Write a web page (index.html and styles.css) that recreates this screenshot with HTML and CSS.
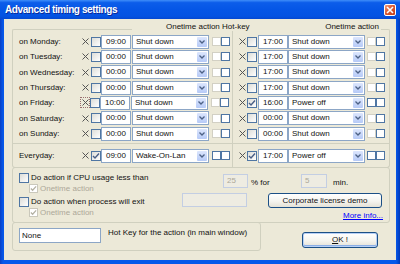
FILE: index.html
```html
<!DOCTYPE html>
<html>
<head>
<meta charset="utf-8">
<link rel="stylesheet" href="styles.css">
</head>
<body>
<div class="window">
  <div class="titlebar">
    <span class="title">Advanced timing settings</span>
    <span class="close"><svg width="8" height="8" viewBox="0 0 8 8"><path d="M1 1L7 7M7 1L1 7" stroke="#fff" stroke-width="1.6"/></svg></span>
  </div>
  <div class="client">
    <div class="cap">
      <span class="seg seg-l"></span>
      <span class="cap-t1">Onetime action Hot-key</span>
      <span class="cap-t2">Onetime action</span>
      <span class="seg seg-r"></span>
    </div>
    <div class="panel">
      <div class="week">
        <div class="half l">
          <div class="row"><span class="day">on Monday:</span><span class="x"><svg width="7" height="7" viewBox="0 0 7 7"><path d="M0.5 0.5L6.5 6.5M6.5 0.5L0.5 6.5" stroke="#555" stroke-width="1"/></svg></span><span class="cb"></span><span class="time">09:00</span><span class="combo"><span class="ct">Shut down</span><span class="arrow"><svg width="6" height="4" viewBox="0 0 6 4"><path d="M0.5 0.5L3 3L5.5 0.5" stroke="#4D6185" stroke-width="1.3" fill="none"/></svg></span></span><span class="hk first dis"></span><span class="hk"></span></div>
          <div class="row"><span class="day">on Tuesday:</span><span class="x"><svg width="7" height="7" viewBox="0 0 7 7"><path d="M0.5 0.5L6.5 6.5M6.5 0.5L0.5 6.5" stroke="#555" stroke-width="1"/></svg></span><span class="cb"></span><span class="time">00:00</span><span class="combo"><span class="ct">Shut down</span><span class="arrow"><svg width="6" height="4" viewBox="0 0 6 4"><path d="M0.5 0.5L3 3L5.5 0.5" stroke="#4D6185" stroke-width="1.3" fill="none"/></svg></span></span><span class="hk first dis"></span><span class="hk"></span></div>
          <div class="row"><span class="day">on Wednesday:</span><span class="x"><svg width="7" height="7" viewBox="0 0 7 7"><path d="M0.5 0.5L6.5 6.5M6.5 0.5L0.5 6.5" stroke="#555" stroke-width="1"/></svg></span><span class="cb"></span><span class="time">00:00</span><span class="combo"><span class="ct">Shut down</span><span class="arrow"><svg width="6" height="4" viewBox="0 0 6 4"><path d="M0.5 0.5L3 3L5.5 0.5" stroke="#4D6185" stroke-width="1.3" fill="none"/></svg></span></span><span class="hk first dis"></span><span class="hk"></span></div>
          <div class="row"><span class="day">on Thursday:</span><span class="x"><svg width="7" height="7" viewBox="0 0 7 7"><path d="M0.5 0.5L6.5 6.5M6.5 0.5L0.5 6.5" stroke="#555" stroke-width="1"/></svg></span><span class="cb"></span><span class="time">00:00</span><span class="combo"><span class="ct">Shut down</span><span class="arrow"><svg width="6" height="4" viewBox="0 0 6 4"><path d="M0.5 0.5L3 3L5.5 0.5" stroke="#4D6185" stroke-width="1.3" fill="none"/></svg></span></span><span class="hk first dis"></span><span class="hk"></span></div>
          <div class="row"><span class="day">on Friday:</span><span class="x focus"><svg width="7" height="7" viewBox="0 0 7 7"><path d="M0.5 0.5L6.5 6.5M6.5 0.5L0.5 6.5" stroke="#555" stroke-width="1"/></svg></span><span class="cb"></span><span class="time">10:00</span><span class="combo"><span class="ct">Shut down</span><span class="arrow"><svg width="6" height="4" viewBox="0 0 6 4"><path d="M0.5 0.5L3 3L5.5 0.5" stroke="#4D6185" stroke-width="1.3" fill="none"/></svg></span></span><span class="hk first dis"></span><span class="hk"></span></div>
          <div class="row"><span class="day">on Saturday:</span><span class="x"><svg width="7" height="7" viewBox="0 0 7 7"><path d="M0.5 0.5L6.5 6.5M6.5 0.5L0.5 6.5" stroke="#555" stroke-width="1"/></svg></span><span class="cb"></span><span class="time">00:00</span><span class="combo"><span class="ct">Shut down</span><span class="arrow"><svg width="6" height="4" viewBox="0 0 6 4"><path d="M0.5 0.5L3 3L5.5 0.5" stroke="#4D6185" stroke-width="1.3" fill="none"/></svg></span></span><span class="hk first dis"></span><span class="hk"></span></div>
          <div class="row"><span class="day">on Sunday:</span><span class="x"><svg width="7" height="7" viewBox="0 0 7 7"><path d="M0.5 0.5L6.5 6.5M6.5 0.5L0.5 6.5" stroke="#555" stroke-width="1"/></svg></span><span class="cb"></span><span class="time">00:00</span><span class="combo"><span class="ct">Shut down</span><span class="arrow"><svg width="6" height="4" viewBox="0 0 6 4"><path d="M0.5 0.5L3 3L5.5 0.5" stroke="#4D6185" stroke-width="1.3" fill="none"/></svg></span></span><span class="hk first dis"></span><span class="hk"></span></div>
        </div>
        <div class="half r">
          <div class="row"><span class="x"><svg width="7" height="7" viewBox="0 0 7 7"><path d="M0.5 0.5L6.5 6.5M6.5 0.5L0.5 6.5" stroke="#555" stroke-width="1"/></svg></span><span class="cb"></span><span class="time">17:00</span><span class="combo"><span class="ct">Shut down</span><span class="arrow"><svg width="6" height="4" viewBox="0 0 6 4"><path d="M0.5 0.5L3 3L5.5 0.5" stroke="#4D6185" stroke-width="1.3" fill="none"/></svg></span></span><span class="hk first dis"></span><span class="hk"></span></div>
          <div class="row"><span class="x"><svg width="7" height="7" viewBox="0 0 7 7"><path d="M0.5 0.5L6.5 6.5M6.5 0.5L0.5 6.5" stroke="#555" stroke-width="1"/></svg></span><span class="cb"></span><span class="time">17:00</span><span class="combo"><span class="ct">Shut down</span><span class="arrow"><svg width="6" height="4" viewBox="0 0 6 4"><path d="M0.5 0.5L3 3L5.5 0.5" stroke="#4D6185" stroke-width="1.3" fill="none"/></svg></span></span><span class="hk first dis"></span><span class="hk"></span></div>
          <div class="row"><span class="x"><svg width="7" height="7" viewBox="0 0 7 7"><path d="M0.5 0.5L6.5 6.5M6.5 0.5L0.5 6.5" stroke="#555" stroke-width="1"/></svg></span><span class="cb"></span><span class="time">17:00</span><span class="combo"><span class="ct">Shut down</span><span class="arrow"><svg width="6" height="4" viewBox="0 0 6 4"><path d="M0.5 0.5L3 3L5.5 0.5" stroke="#4D6185" stroke-width="1.3" fill="none"/></svg></span></span><span class="hk first dis"></span><span class="hk"></span></div>
          <div class="row"><span class="x"><svg width="7" height="7" viewBox="0 0 7 7"><path d="M0.5 0.5L6.5 6.5M6.5 0.5L0.5 6.5" stroke="#555" stroke-width="1"/></svg></span><span class="cb"></span><span class="time">17:00</span><span class="combo"><span class="ct">Shut down</span><span class="arrow"><svg width="6" height="4" viewBox="0 0 6 4"><path d="M0.5 0.5L3 3L5.5 0.5" stroke="#4D6185" stroke-width="1.3" fill="none"/></svg></span></span><span class="hk first dis"></span><span class="hk"></span></div>
          <div class="row"><span class="x"><svg width="7" height="7" viewBox="0 0 7 7"><path d="M0.5 0.5L6.5 6.5M6.5 0.5L0.5 6.5" stroke="#555" stroke-width="1"/></svg></span><span class="cb on"><svg width="8" height="8" viewBox="0 0 8 8"><path d="M1 4L3 6L7 1.5" stroke="#4A5F86" stroke-width="1.4" fill="none"/></svg></span><span class="time">16:00</span><span class="combo"><span class="ct">Power off</span><span class="arrow"><svg width="6" height="4" viewBox="0 0 6 4"><path d="M0.5 0.5L3 3L5.5 0.5" stroke="#4D6185" stroke-width="1.3" fill="none"/></svg></span></span><span class="hk first"></span><span class="hk"></span></div>
          <div class="row"><span class="x"><svg width="7" height="7" viewBox="0 0 7 7"><path d="M0.5 0.5L6.5 6.5M6.5 0.5L0.5 6.5" stroke="#555" stroke-width="1"/></svg></span><span class="cb"></span><span class="time">00:00</span><span class="combo"><span class="ct">Shut down</span><span class="arrow"><svg width="6" height="4" viewBox="0 0 6 4"><path d="M0.5 0.5L3 3L5.5 0.5" stroke="#4D6185" stroke-width="1.3" fill="none"/></svg></span></span><span class="hk first dis"></span><span class="hk"></span></div>
          <div class="row"><span class="x"><svg width="7" height="7" viewBox="0 0 7 7"><path d="M0.5 0.5L6.5 6.5M6.5 0.5L0.5 6.5" stroke="#555" stroke-width="1"/></svg></span><span class="cb"></span><span class="time">00:00</span><span class="combo"><span class="ct">Shut down</span><span class="arrow"><svg width="6" height="4" viewBox="0 0 6 4"><path d="M0.5 0.5L3 3L5.5 0.5" stroke="#4D6185" stroke-width="1.3" fill="none"/></svg></span></span><span class="hk first dis"></span><span class="hk"></span></div>
        </div>
      </div>
      <div class="every">
        <div class="half l">
          <div class="row"><span class="day">Everyday:</span><span class="x"><svg width="7" height="7" viewBox="0 0 7 7"><path d="M0.5 0.5L6.5 6.5M6.5 0.5L0.5 6.5" stroke="#555" stroke-width="1"/></svg></span><span class="cb on"><svg width="8" height="8" viewBox="0 0 8 8"><path d="M1 4L3 6L7 1.5" stroke="#4A5F86" stroke-width="1.4" fill="none"/></svg></span><span class="time">09:00</span><span class="combo"><span class="ct">Wake-On-Lan</span><span class="arrow"><svg width="6" height="4" viewBox="0 0 6 4"><path d="M0.5 0.5L3 3L5.5 0.5" stroke="#4D6185" stroke-width="1.3" fill="none"/></svg></span></span><span class="hk first"></span><span class="hk"></span></div>
        </div>
        <div class="half r">
          <div class="row"><span class="x"><svg width="7" height="7" viewBox="0 0 7 7"><path d="M0.5 0.5L6.5 6.5M6.5 0.5L0.5 6.5" stroke="#555" stroke-width="1"/></svg></span><span class="cb on"><svg width="8" height="8" viewBox="0 0 8 8"><path d="M1 4L3 6L7 1.5" stroke="#4A5F86" stroke-width="1.4" fill="none"/></svg></span><span class="time">17:00</span><span class="combo"><span class="ct">Power off</span><span class="arrow"><svg width="6" height="4" viewBox="0 0 6 4"><path d="M0.5 0.5L3 3L5.5 0.5" stroke="#4D6185" stroke-width="1.3" fill="none"/></svg></span></span><span class="hk first"></span><span class="hk"></span></div>
        </div>
      </div>
    </div>

    <div class="cpu">
      <div class="blk1">
        <div class="stack1">
          <div class="chk-line"><span class="cb big"></span><span class="lbl">Do action if CPU usage less than</span></div>
          <div class="sub-line"><span class="cb small"><svg width="7" height="7" viewBox="0 0 8 8"><path d="M1 4L3 6L7 1.5" stroke="#B4B1A3" stroke-width="1.4" fill="none"/></svg></span><span class="lbl">Onetime action</span></div>
        </div>
        <span class="dinput in25">25</span>
        <span class="pct">% for</span>
        <span class="dinput in5">5</span>
        <span class="min">min.</span>
      </div>
      <div class="blk2">
        <div class="stack2">
          <div class="chk-line"><span class="cb big"></span><span class="lbl">Do action when process will exit</span></div>
          <div class="sub-line"><span class="cb small"><svg width="7" height="7" viewBox="0 0 8 8"><path d="M1 4L3 6L7 1.5" stroke="#B4B1A3" stroke-width="1.4" fill="none"/></svg></span><span class="lbl">Onetime action</span></div>
        </div>
        <span class="dinput inproc"></span>
        <div class="rstack">
          <button class="btn corp">Corporate license demo</button>
          <a class="link" href="#">More info...</a>
        </div>
      </div>
    </div>

    <div class="bottom">
      <div class="hkgroup">
        <span class="none">None</span>
        <span class="hktext">Hot Key for the action (in main window)</span>
      </div>
      <button class="btn ok"><u>O</u>K !</button>
    </div>
  </div>
</div>
</body>
</html>
```

FILE: styles.css
```css
* { box-sizing: border-box; }
html, body { margin: 0; padding: 0; }
body {
  width: 400px;
  height: 264px;
  overflow: hidden;
  font-family: "Liberation Sans", Arial, sans-serif;
  font-size: 8px;
  line-height: 9px;
  color: #111;
  background: #fff;
}
.window {
  width: 400px;
  height: 264px;
  display: flex;
  flex-direction: column;
  background: linear-gradient(to right, #0A3FC4 0, #0658EA 3px, #0658EA 396px, #0038B8 400px);
}
.titlebar {
  height: 19px;
  display: flex;
  align-items: center;
  padding-left: 5px;
  background: linear-gradient(to bottom, #3F8EF9 0%, #0C5DEA 14%, #0556E6 50%, #0453E2 85%, #0548D2 100%);
}
.title {
  color: #fff;
  font-weight: bold;
  font-size: 10px;
  letter-spacing: -0.4px;
  text-shadow: 1px 1px 0 #0A2A9A;
}
.close {
  margin-left: auto;
  margin-right: 4px;
  width: 12px;
  height: 12px;
  border: 1px solid #fff;
  border-radius: 2px;
  background: linear-gradient(135deg, #F29C7E 0%, #DC5A33 45%, #C43D17 100%);
  display: flex;
  align-items: center;
  justify-content: center;
}
.client {
  flex: 1;
  margin: 0 4px 4px 4px;
  background: #ECE9D8;
  padding: 3px 0 0 8px;
}

/* caption row */
.cap { display: flex; width: 378px; height: 9px; }
.seg { align-self: flex-end; height: 2px; border-top: 1px solid #D0D0BF; }
.seg-l { width: 120px; border-left: 1px solid #D0D0BF; border-top-left-radius: 2px; }
.cap-t1 { margin-left: 34px; white-space: nowrap; }
.cap-t2 { margin-left: auto; margin-right: 2px; white-space: nowrap; }
.seg-r { width: 9px; border-right: 1px solid #D0D0BF; border-top-right-radius: 2px; }

.panel {
  width: 378px;
  border: 1px solid #D0D0BF;
  border-top: none;
  border-radius: 0 0 3px 3px;
}
.week { display: flex; height: 113px; border-bottom: 1px solid #D0D0BF; }
.every { display: flex; height: 23px; }
.half { padding-left: 6px; }
.half.l { width: 220px; border-right: 1px solid #D0D0BF; }
.half.r { flex: 1; }
.week .half { padding-top: 3px; }
.row { display: flex; align-items: center; height: 15.333px; }
.every .row { height: 23px; }

.day { width: 63px; white-space: nowrap; }
.x { display: flex; align-items: center; height: 9px; }
.l .x { width: 8px; }
.r .x { width: 7px; }
.x.focus { outline: 1px dotted #9A7070; outline-offset: 0; width: 8px; margin-left: -1px; padding-left: 1px; }

.cb {
  width: 10px;
  height: 10px;
  margin-left: 1px;
  border: 1px solid #4F76A3;
  background: linear-gradient(135deg, #DDDDD8, #FFFFFF);
  display: flex;
  align-items: center;
  justify-content: center;
}
.time {
  width: 30px;
  height: 14px;
  border: 1px solid #8CA6C6;
  background: #fff;
  text-align: right;
  padding-right: 4px;
  line-height: 12px;
}
.r .time { margin-left: 1px; }
.combo {
  width: 77px;
  height: 14px;
  margin-left: 1px;
  border: 1px solid #8CA6C6;
  background: #fff;
  display: flex;
  padding: 1px;
}
.r .combo { margin-left: 0; }
.ct { flex: 1; padding-left: 2px; line-height: 10px; white-space: nowrap; }
.arrow {
  width: 10px;
  border-radius: 1px;
  background: linear-gradient(#DCE6FD, #B6CAF7);
  display: flex;
  align-items: center;
  justify-content: center;
}
.hk { width: 9px; height: 9px; border: 1px solid #4F76A3; background: #fff; }
.hk.first { margin-left: 3px; }
.r .hk.first { margin-left: 2px; }
.hk.dis { border-color: #D2D0C4; }

/* cpu group */
.cpu {
  width: 378px;
  height: 56px;
  margin-top: -1px;
  border: 1px solid #D0D0BF;
  border-radius: 3px;
  padding-left: 6px;
}
.blk1 { display: flex; align-items: flex-start; height: 25px; }
.blk2 { display: flex; align-items: flex-start; height: 29px; }
.stack1 { width: 204px; }
.stack2 { width: 163px; }
.chk-line { display: flex; align-items: center; height: 11px; white-space: nowrap; }
.stack1 .chk-line { margin-top: 4px; }
.stack2 .chk-line { margin-top: 3px; }
.chk-line .cb { margin-left: 0; }
.chk-line .lbl { margin-left: 2px; }
.sub-line { display: flex; align-items: center; height: 10px; padding-left: 10px; color: #ACA899; white-space: nowrap; }
.cb.small { width: 9px; height: 9px; margin-left: 0; border-color: #CAC8BB; background: #fff; }
.sub-line .lbl { margin-left: 2px; }
.dinput {
  height: 14px;
  border: 1px solid #C3CEE3;
  background: #EEECE2;
  color: #ACA899;
  padding-left: 3px;
  line-height: 12px;
}
.in25 { width: 25px; margin-top: 6px; }
.pct { width: 53px; padding-left: 3px; margin-top: 10px; }
.in5 { width: 26px; margin-top: 6px; }
.min { margin-left: 6px; margin-top: 10px; }
.inproc { width: 65px; }
.rstack { margin-left: 21px; width: 115px; display: flex; flex-direction: column; align-items: flex-end; }
.btn {
  font: inherit;
  color: #111;
  padding: 0;
  margin: 0;
  border: 1px solid #1B4F86;
  border-radius: 3px;
  background: linear-gradient(#FFFFFF 0%, #F5F4EF 55%, #E4E1D6 100%);
  text-align: center;
  line-height: 12px;
  appearance: none;
}
.corp { width: 114px; height: 15px; align-self: flex-start; }
.link { margin-top: 3px; color: #0000FF; text-decoration: underline; }

/* bottom */
.bottom { display: flex; align-items: flex-start; margin-top: -1px; }
.hkgroup {
  width: 249px;
  height: 29px;
  border: 1px solid #D0D0BF;
  border-radius: 3px;
  display: flex;
  align-items: flex-start;
  padding: 5px 0 0 6px;
}
.none {
  width: 82px;
  height: 15px;
  border: 1px solid #8CA6C6;
  background: #fff;
  padding-left: 2px;
  line-height: 13px;
}
.hktext { margin-left: 7px; white-space: nowrap; }
.ok {
  margin-left: 41px;
  margin-top: 10px;
  width: 76px;
  height: 16px;
  line-height: 14px;
  box-shadow: inset 0 0 0 1px #B7D0F6, inset 0 -1px 0 1px #8BAEE6;
}
```
